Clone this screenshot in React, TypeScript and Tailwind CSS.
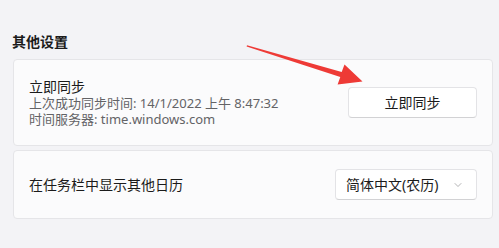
import { ChevronDown } from "lucide-react";

const font = { fontFamily: '"Noto Sans", "Noto Sans CJK SC", sans-serif' };

function Arrow() {
  // red annotation arrow pointing at the sync button
  return (
    <svg
      className="pointer-events-none absolute left-0 top-0"
      width="499"
      height="248"
      viewBox="0 0 499 248"
    >
      <polygon
        points="247,45.3 341.7,72.1 344.5,64.6 362.5,81.6 337.6,84.4 340.3,76.9 246.6,46.6"
        fill="#ee3a36"
      />
    </svg>
  );
}

export default function App() {
  return (
    <div
      className="relative h-[248px] w-[499px] overflow-hidden bg-[#f3f3f6] px-[12px] pt-[31px] text-[#1b1b1b]"
      style={font}
    >
      <div className="h-[21px] text-[14px] font-bold leading-[21px]">其他设置</div>

      <div className="ml-[1px] mt-[7px] flex h-[87px] w-[480px] items-center justify-between rounded-[4px] border border-[#e5e5e8] bg-[#fbfbfc] px-[15px]">
        <div className="flex flex-col">
          <div className="text-[14px] leading-[17px]">立即同步</div>
          <div className="text-[13px] leading-[16.5px] text-[#636366]">
            上次成功同步时间: 14/1/2022 上午 8:47:32
          </div>
          <div className="text-[13px] leading-[16.5px] text-[#636366]">
            时间服务器: time.windows.com
          </div>
        </div>
        <button className="flex h-[31px] w-[129px] items-center justify-center rounded-[4px] border border-[#e3e3e6] border-b-[#d2d2d4] bg-white text-[14px]">
          立即同步
        </button>
      </div>

      <div className="ml-[1px] mt-[4px] flex h-[69px] w-[480px] items-center justify-between rounded-[4px] border border-[#e5e5e8] bg-[#fbfbfc] px-[15px]">
        <div className="text-[14px]">在任务栏中显示其他日历</div>
        <button className="flex h-[31px] w-[142px] items-center justify-between rounded-[4px] border border-[#e3e3e6] border-b-[#d2d2d4] bg-white pl-[10px] pr-[12px] text-[14px]">
          <span>简体中文(农历)</span>
          <ChevronDown size={12} strokeWidth={1.3} className="text-[#8a8a8d]" />
        </button>
      </div>

      <Arrow />
    </div>
  );
}
